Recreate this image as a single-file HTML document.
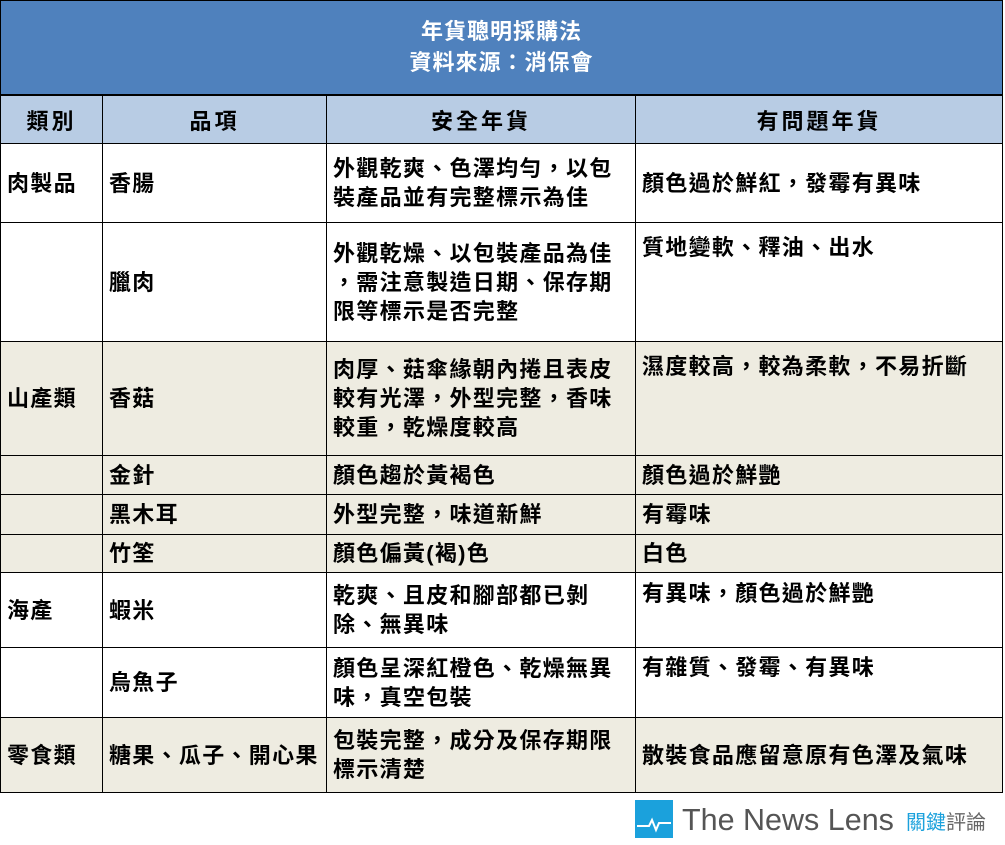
<!DOCTYPE html>
<html><head><meta charset="utf-8"><style>
body{margin:0;background:#fff;width:1005px;height:845px;position:relative;overflow:hidden;font-family:"Liberation Sans","Noto Sans CJK TC",sans-serif;}
.t{position:absolute;left:0;top:0;width:1003px;height:96px;background:#4f81bd;border:1px solid #000;border-bottom:2px solid #000;box-sizing:border-box;color:#fff;font-size:22px;font-weight:bold;text-align:center;line-height:31px;padding-top:15px;letter-spacing:1px}
table{position:absolute;left:0;top:95px;border-collapse:collapse;table-layout:fixed;font-size:22px;color:#000;font-weight:bold;letter-spacing:1.3px;line-break:anywhere}
td{border:1px solid #000;padding:0 14px 0 6px;line-height:29px;vertical-align:middle;}
th{border:1px solid #000;background:#b8cce4;font-weight:bold;height:45px;font-size:22px;letter-spacing:3px}
.b td{background:#eeece1}
.r{vertical-align:top;padding-top:10px}
</style></head><body>
<div class="t">年貨聰明採購法<br>資料來源：消保會</div>
<table>
<colgroup><col style="width:102px"><col style="width:224px"><col style="width:309px"><col style="width:367px"></colgroup>
<tr><th>類別</th><th>品項</th><th>安全年貨</th><th>有問題年貨</th></tr>
<tr style="height:79px"><td>肉製品</td><td>香腸</td><td>外觀乾爽、色澤均勻，以包<br>裝產品並有完整標示為佳</td><td>顏色過於鮮紅，發霉有異味</td></tr>
<tr style="height:119px"><td></td><td>臘肉</td><td>外觀乾燥、以包裝產品為佳<br>，需注意製造日期、保存期<br>限等標示是否完整</td><td class="r">質地變軟、釋油、出水</td></tr>
<tr class="b" style="height:114px"><td>山產類</td><td>香菇</td><td>肉厚、菇傘緣朝內捲且表皮<br>較有光澤，外型完整，香味<br>較重，乾燥度較高</td><td class="r">濕度較高，較為柔軟，不易折斷</td></tr>
<tr class="b" style="height:39px"><td></td><td>金針</td><td>顏色趨於黃褐色</td><td>顏色過於鮮艷</td></tr>
<tr class="b" style="height:40px"><td></td><td>黑木耳</td><td>外型完整，味道新鮮</td><td>有霉味</td></tr>
<tr class="b" style="height:38px"><td></td><td>竹筌</td><td>顏色偏黃(褐)色</td><td>白色</td></tr>
<tr style="height:75px"><td>海產</td><td>蝦米</td><td>乾爽、且皮和腳部都已剝<br>除、無異味</td><td class="r" style="padding-top:6px">有異味，顏色過於鮮艷</td></tr>
<tr style="height:70px"><td></td><td>烏魚子</td><td>顏色呈深紅橙色、乾燥無異<br>味，真空包裝</td><td class="r" style="padding-top:5px">有雜質、發霉、有異味</td></tr>
<tr class="b" style="height:75px"><td>零食類</td><td style="padding-right:0">糖果、瓜子、開心果</td><td>包裝完整，成分及保存期限<br>標示清楚</td><td>散裝食品應留意原有色澤及氣味</td></tr>
</table>
<div style="position:absolute;left:635px;top:800px;width:38px;height:38px;background:#1ba1dc"><svg width="38" height="38"><path d="M2 26 H14 L17 20 L21 30 L24 23 H36" stroke="#fff" stroke-width="2" fill="none"/></svg></div>
<div style="position:absolute;left:682px;top:800px;font-size:30.5px;color:#555;line-height:40px;font-family:'Liberation Sans',sans-serif;white-space:nowrap">The News Lens</div>
<div style="position:absolute;left:906px;top:808px;font-size:20px;line-height:26px;color:#1ba1dc;font-family:'Noto Sans CJK TC',sans-serif;white-space:nowrap">關鍵<span style="color:#666">評論</span></div>
</body></html>
